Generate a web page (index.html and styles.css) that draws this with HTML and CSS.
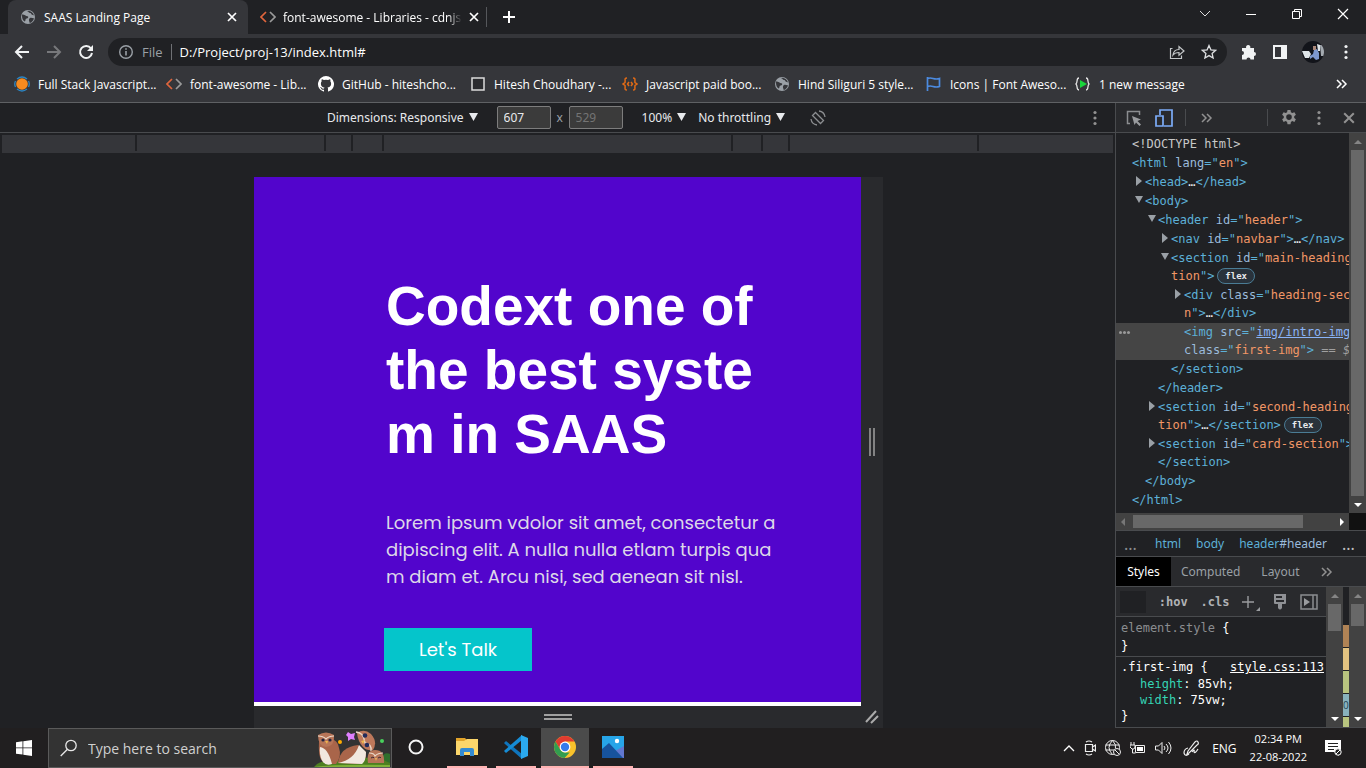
FILE: index.html
```html
<!DOCTYPE html>
<html lang="en">
<head>
<meta charset="utf-8">
<title>SAAS Landing Page</title>
<link rel="stylesheet" href="styles.css">
</head>
<body>
<svg class="sprite" aria-hidden="true">
  <symbol id="globe" viewBox="0 0 16 16"><circle cx="8" cy="8" r="7" fill="#9aa0a6"/><path d="M2 5.500C4 5 5.500 7 7.500 7.200 9 7.500 8 9.500 6.500 9.500 5 9.500 6 12.500 4.500 12.500 3 11.500 1.800 9.500 2 5.500zM7 2.200c2 0 1.500 1.800 3.200 1.800C11.500 4 11 6 13 6l1 .6C13.500 4 11 1.800 8 1.700zM10 9c1.500-.8 2.500.5 4 .2-.5 2.500-2.300 4.200-4.200 4.800C9.500 12.500 8 10.500 10 9z" fill="#35363a"/></symbol>
  <symbol id="cdn" viewBox="0 0 16 12"><path d="M6 1 1 6l5 5" fill="none" stroke="#e0653c" stroke-width="1.700"/><path d="m10 1 5 5-5 5" fill="none" stroke="#9a9a9a" stroke-width="1.700"/></symbol>
  <symbol id="close" viewBox="0 0 10 10"><path d="m1 1 8 8M9 1 1 9" fill="none" stroke="currentColor" stroke-width="1.700"/></symbol>
  <symbol id="chevrons" viewBox="0 0 12 10"><path d="m1 1 4 4-4 4M6 1l4 4-4 4" fill="none" stroke="currentColor" stroke-width="1.500"/></symbol>
  <symbol id="dots" viewBox="0 0 4 16"><circle cx="2" cy="2.500" r="1.600"/><circle cx="2" cy="8" r="1.600"/><circle cx="2" cy="13.500" r="1.600"/></symbol>
  <symbol id="up" viewBox="0 0 8 4"><path d="M0 4 4 0l4 4z"/></symbol>
  <symbol id="down" viewBox="0 0 8 4"><path d="m0 0 4 4 4-4z"/></symbol>
  <symbol id="tri" viewBox="0 0 8 8"><path d="M0 0h8L4 7z"/></symbol>
</svg>

<header class="tabs">
  <div class="tab active"><svg class="i16"><use href="#globe"/></svg><span class="tab-title">SAAS Landing Page</span><button class="plain" aria-label="Close tab"><svg class="i10"><use href="#close"/></svg></button></div>
  <div class="tab second"><svg class="cdn"><use href="#cdn"/></svg><span class="tab-title fade">font-awesome - Libraries - cdnjs</span><button class="plain" aria-label="Close tab"><svg class="i10"><use href="#close"/></svg></button></div>
  <button class="plain new-tab" aria-label="New tab"><svg width="12" height="12"><path d="M6 0v12M0 6h12" stroke="#fff" stroke-width="2"/></svg></button>
  <div class="window-buttons">
    <button class="plain" aria-label="Search tabs"><svg width="12" height="12"><path d="m1 3 5 5 5-5" fill="none" stroke="#ddd"/></svg></button>
    <button class="plain" aria-label="Minimize"><svg width="12" height="12"><path d="M1 6.500h10" stroke="#fff"/></svg></button>
    <button class="plain" aria-label="Restore"><svg width="12" height="12"><path d="M1.500 3.500h7v7h-7zM3.500 3.500v-2h7v7h-2" fill="none" stroke="#fff"/></svg></button>
    <button class="plain" aria-label="Close"><svg width="12" height="12"><path d="m1 1 10 10M11 1 1 11" stroke="#fff" stroke-width="1.200"/></svg></button>
  </div>
</header>

<nav class="toolbar">
  <button class="plain" aria-label="Back"><svg width="16" height="16"><path d="M15 8H2M8 2 2 8l6 6" fill="none" stroke="#f1f3f4" stroke-width="2"/></svg></button>
  <button class="plain" aria-label="Forward"><svg width="16" height="16"><path d="M1 8h13M8 2l6 6-6 6" fill="none" stroke="#77787b" stroke-width="2"/></svg></button>
  <button class="plain" aria-label="Reload"><svg width="16" height="16"><path d="M13 4.500A6 6 0 1 0 14 9" fill="none" stroke="#f1f3f4" stroke-width="2"/><path d="M15 1v6H9z" fill="#f1f3f4"/></svg></button>
  <div class="address">
    <svg width="16" height="16"><circle cx="8" cy="8" r="6.300" fill="none" stroke="#9aa0a6" stroke-width="1.400"/><path d="M8 7v4.500M8 4.200v1.600" stroke="#9aa0a6" stroke-width="1.600"/></svg>
    <label for="url">File</label>
    <input id="url" type="text" value="D:/Project/proj-13/index.html#">
    <button class="plain" aria-label="Share"><svg width="16" height="16"><path d="M3.500 4.500h-2v10h11v-3M4 11c.5-4 3-5.500 6-5.500V2.500l5 4.500-5 4.300V8.500C7.500 8.500 5.500 9 4 11z" fill="none" stroke="#c4c7c9" stroke-width="1.200"/></svg></button>
    <button class="plain" aria-label="Bookmark"><svg width="16" height="16"><path d="m8 1.500 1.900 4.300 4.700.5-3.500 3.100 1 4.600L8 11.600 3.900 14l1-4.600L1.400 6.300l4.700-.5z" fill="none" stroke="#dcdee0" stroke-width="1.300"/></svg></button>
  </div>
  <div class="actions">
    <button class="plain" aria-label="Extensions"><svg width="16" height="16"><path d="M1 4h4.200a2.200 2.200 0 1 1 4 0H13v4a2 2 0 1 1 0 4v3.500H9.500a2 2 0 0 0-4 0H1V11a2 2 0 1 0 0-4z" fill="#f1f3f4"/></svg></button>
    <button class="plain" aria-label="Side panel"><svg width="14" height="14"><path fill-rule="evenodd" d="M0 0h14v14H0zM2 2v10h6V2z" fill="#f1f3f4"/></svg></button>
    <button class="plain" aria-label="Profile"><svg width="22" height="22"><defs><clipPath id="face"><circle cx="11" cy="11" r="11"/></clipPath></defs><g clip-path="url(#face)"><path fill="#12141a" d="M0 0h22v22H0z"/><path fill="#dfe5e9" d="M0 10h7l2 3-2 4H3zM15 3l3 1v6h-2z"/><path fill="#7d98ce" d="m12 9 3-1 2 4v6l-3 1-3-3-3 2v-3l3-2z"/><path fill="#a98678" d="M11 5h3v4h-3z"/><path fill="#a4aab0" d="M18 4h4v11h-3z"/></g></svg></button>
    <button class="plain" aria-label="Menu"><svg class="dots light"><use href="#dots"/></svg></button>
  </div>
</nav>

<nav class="bookmarks">
  <a href="#"><svg class="i16" viewBox="0 0 16 16"><circle cx="8" cy="8" r="5.800" fill="#f68b1f"/><path d="M3 3Q8-1 13 3M3 13q5 4 10 0M1.500 5Q0 8 1.500 11M14.500 5Q16 8 14.500 11" fill="none" stroke="#2b86c5" stroke-width="1.300"/></svg><span>Full Stack Javascript...</span></a>
  <a href="#"><svg class="cdn"><use href="#cdn"/></svg><span>font-awesome - Lib...</span></a>
  <a href="#"><svg class="i16" viewBox="0 0 16 16"><path fill="#fff" d="M8 0a8 8 0 0 0-2.500 15.600c.4.100.5-.2.500-.4v-1.500c-2.200.5-2.700-1-2.700-1-.4-.9-.9-1.200-.9-1.200-.7-.5.100-.5.100-.5.800.100 1.200.8 1.200.8.700 1.200 1.900.9 2.300.7.100-.5.300-.9.500-1.100-1.800-.2-3.600-.9-3.600-4 0-.9.300-1.600.8-2.100-.1-.2-.4-1 .1-2.100 0 0 .7-.2 2.200.8a7.500 7.500 0 0 1 4 0c1.500-1 2.200-.8 2.200-.8.400 1.100.200 1.900.100 2.100.500.500.800 1.200.800 2.100 0 3.100-1.900 3.700-3.600 3.900.300.300.500.8.500 1.500v2.400c0 .2.100.5.500.4A8 8 0 0 0 8 0z"/></svg><span>GitHub - hiteshcho...</span></a>
  <a href="#"><svg class="i16" viewBox="0 0 16 16"><path d="M2 2h12v12H2z" fill="#2b2c2f" stroke="#dcdcdc" stroke-width="1.500"/></svg><span>Hitesh Choudhary -...</span></a>
  <a href="#"><svg class="i16" viewBox="0 0 16 16"><path d="M5 2C2 2 3.500 4 3 6.500L1 8l2 1.500C3.500 12 2 14 5 14M11 2c3 0 1.500 2 2 4.500L15 8l-2 1.500c-.5 2.500 1 4.500-2 4.500M7 6 5.500 8 7 10M9 6l1.500 2L9 10" fill="none" stroke="#df6a16" stroke-width="1.500"/></svg><span>Javascript paid boo...</span></a>
  <a href="#"><svg class="i16"><use href="#globe"/></svg><span>Hind Siliguri 5 style...</span></a>
  <a href="#" class="narrow"><svg class="i16" viewBox="0 0 16 16"><path d="M1.500 1v14M1.500 2.500c5-2 6 2 12 0v8c-6 2-7-2-12 0" fill="none" stroke="#4c8be0" stroke-width="1.700"/></svg><span>Icons | Font Aweso...</span></a>
  <a href="#"><svg class="i16" viewBox="0 0 16 16"><path d="M4 2C1 2 3 6 1 8c2 2 0 6 3 6M11 2c3 0 1 4 3 6-2 2 0 6-3 6" fill="none" stroke="#e5e5e5" stroke-width="1.300"/><path d="m5 4 7 4-7 4z" fill="#19d63b"/></svg><span>1 new message</span></a>
  <button class="plain more" aria-label="More bookmarks"><svg class="chev"><use href="#chevrons"/></svg></button>
</nav>

<main class="work">
  <section class="device">
    <div class="device-bar">
      <button class="plain drop">Dimensions: Responsive <svg class="tri"><use href="#tri"/></svg></button>
      <input class="size" type="text" value="607" aria-label="Width"><span class="times">x</span><input class="size dim" type="text" value="529" aria-label="Height">
      <button class="plain drop zoom">100% <svg class="tri"><use href="#tri"/></svg></button>
      <button class="plain drop">No throttling <svg class="tri"><use href="#tri"/></svg></button>
      <button class="plain rotate" aria-label="Rotate"><svg width="16" height="16"><path d="m5.500 2.500 8 8-3 3-8-8zM9 1a7 7 0 0 1 6 6M7 15a7 7 0 0 1-6-6" fill="none" stroke="#8b8d90" stroke-width="1.300"/></svg></button>
      <button class="plain device-menu" aria-label="More options"><svg class="dots"><use href="#dots"/></svg></button>
    </div>
    <div class="ruler"><i></i><i></i><i></i><i></i><i></i><i></i><i></i><i></i><i></i></div>
    <div class="stage">
      <article class="screen">
        <div class="hero">
          <h1>Codext one of<br>the best syste<br>m in SAAS</h1>
          <p>Lorem ipsum vdolor sit amet, consectetur a<br>dipiscing elit. A nulla nulla etlam turpis qua<br>m diam et. Arcu nisi, sed aenean sit nisl.</p>
          <a class="talk" href="#">Let's Talk</a>
        </div>
      </article>
      <div class="grip side"><svg width="6" height="28"><path d="M1 0v28M5 0v28" stroke="#999" stroke-width="1.600"/></svg></div>
      <div class="grip bottom"><svg width="28" height="8"><path d="M0 2h28M0 6h28" stroke="#a0a0a0" stroke-width="2"/></svg></div>
      <div class="grip corner"><svg width="14" height="14"><path d="M1 12 11 1M6 13l7-7" stroke="#aaa" stroke-width="2"/></svg></div>
    </div>
  </section>

  <aside class="devtools">
    <div class="dt-bar">
      <button class="plain" aria-label="Inspect"><svg width="16" height="16"><path d="M4 13.500H1.500v-12h12V5" fill="none" stroke="#8b8d90" stroke-width="1.500"/><path d="m6 6 9 3.500-3.500 1.500 3.500 3.500-1.500 1.500L10 12.500 8.500 15z" fill="#9a9c9f"/></svg></button>
      <button class="plain" aria-label="Device toolbar"><svg width="18" height="18"><path d="M5 6V1h12v16H9M1 7h7v10H1z" fill="none" stroke="#7cacf8" stroke-width="1.700"/></svg></button>
      <hr>
      <button class="plain" aria-label="More panels"><svg class="chev grey"><use href="#chevrons"/></svg></button>
      <hr class="push">
      <button class="plain" aria-label="Settings"><svg width="16" height="16" viewBox="0 0 16 16"><path fill-rule="evenodd" fill="#919191" d="M6.500 0h3l.4 2.200 1.400.8 2.100-.8 1.500 2.600L13.200 6.200v1.700l1.700 1.400-1.500 2.600-2.100-.8-1.400.8-.4 2.300h-3l-.4-2.300-1.400-.8-2.100.8-1.500-2.600L2.800 7.900V6.200L1.100 4.800l1.500-2.600 2.100.8 1.400-.8zM8 4.300a2.800 2.800 0 1 0 0 5.600 2.800 2.800 0 0 0 0-5.600z"/></svg></button>
      <button class="plain" aria-label="DevTools menu"><svg class="dots"><use href="#dots"/></svg></button>
      <button class="plain grey" aria-label="Close DevTools"><svg class="i10 big"><use href="#close"/></svg></button>
    </div>

    <div class="elements">
      <ul class="tree">
        <li class="l0 doc">&lt;!DOCTYPE html&gt;</li>
        <li class="l0">&lt;html <b>lang</b>="<em>en</em>"&gt;</li>
        <li class="l1 shut">&lt;head&gt;<s>…</s>&lt;/head&gt;</li>
        <li class="l1 open">&lt;body&gt;</li>
        <li class="l2 open">&lt;header <b>id</b>="<em>header</em>"&gt;</li>
        <li class="l3 shut">&lt;nav <b>id</b>="<em>navbar</em>"&gt;<s>…</s>&lt;/nav&gt;</li>
        <li class="l3 open">&lt;section <b>id</b>="<em>main-heading-sec<br>tion</em>"&gt;<span class="badge">flex</span></li>
        <li class="l4 shut">&lt;div <b>class</b>="<em>heading-sectio<br>n</em>"&gt;<s>…</s>&lt;/div&gt;</li>
        <li class="l4 picked">&lt;img <b>src</b>="<a href="#">img/intro-img.png</a>"<br><b>class</b>="<em>first-img</em>"&gt;<span class="ref"> == $0</span></li>
        <li class="l3">&lt;/section&gt;</li>
        <li class="l2">&lt;/header&gt;</li>
        <li class="l2 shut">&lt;section <b>id</b>="<em>second-heading-sec<br>tion</em>"&gt;<s>…</s>&lt;/section&gt;<span class="badge">flex</span></li>
        <li class="l2 shut">&lt;section <b>id</b>="<em>card-section</em>"&gt;<s>…</s><br>&lt;/section&gt;</li>
        <li class="l1">&lt;/body&gt;</li>
        <li class="l0">&lt;/html&gt;</li>
      </ul>
      <div class="vbar"><svg class="arrow off"><use href="#up"/></svg><div class="thumb long"></div><svg class="arrow"><use href="#down"/></svg></div>
      <div class="hbar"><svg width="4" height="8"><path d="M4 0v8L0 4z" fill="#777"/></svg><div class="hthumb"></div><svg width="4" height="8"><path d="m0 0 4 4-4 4z" fill="#fff"/></svg></div>
      <div class="notch"></div>
    </div>

    <div class="crumbs"><span class="ell">...</span><a href="#">html</a><a href="#">body</a><a href="#">header<b>#header</b></a><span class="ell end">...</span></div>
    <div class="panes"><button class="plain on">Styles</button><button class="plain">Computed</button><button class="plain">Layout</button><button class="plain" aria-label="More panes"><svg class="chev grey"><use href="#chevrons"/></svg></button></div>

    <div class="styles">
      <div class="rules">
        <div class="filter">
          <input type="text" aria-label="Filter styles">
          <button class="plain">:hov</button><button class="plain">.cls</button>
          <button class="plain" aria-label="New rule"><svg width="18" height="18"><path d="M6 3v12M0 9h12" stroke="#9a9c9f" stroke-width="1.400"/><path d="M18 14v5h-5z" fill="#9a9c9f"/></svg></button>
          <button class="plain" aria-label="Paint"><svg width="14" height="16"><path fill-rule="evenodd" d="M1 0h12v9q0 1-1 1H9v4q-2 3-4 0v-4H2q-1 0-1-1zM3 2v2h6V2zM3 6v2h8V6z" fill="#8f9195"/></svg></button>
          <button class="plain" aria-label="Sidebar"><svg width="18" height="16"><path d="M1 1h16v14H1zM13 1v14" fill="none" stroke="#8b8d90" stroke-width="1.500"/><path d="m4 4 6 4-6 4z" fill="#9a9c9f"/></svg></button>
        </div>
        <div class="rule"><span class="faint">element.style</span> {<br>}</div>
        <div class="rule last"><div class="selector"><span>.first-img {</span><a href="#">style.css:113</a></div><div class="decl"><i>height</i>: 85vh;</div><div class="decl"><i>width</i>: 75vw;</div><div>}</div></div>
      </div>
      <div class="vbar"><svg class="arrow off"><use href="#up"/></svg><div class="thumb mid"></div><svg class="arrow"><use href="#down"/></svg></div>
      <div class="box-model"><i class="m"></i><i class="b"></i><i class="p"></i><i class="c">0</i><i class="p"></i></div>
      <div class="vbar"><svg class="arrow off"><use href="#up"/></svg><div class="thumb short"></div><svg class="arrow"><use href="#down"/></svg></div>
    </div>
  </aside>
</main>

<footer class="taskbar">
  <button class="plain start" aria-label="Start"><svg width="16" height="16"><path fill="#fff" d="M0 2.200 6.500 1.300v6.200H0zM7.300 1.200 16 0v7.500H7.300zM0 8.300h6.500v6.300L0 13.700zM7.300 8.300H16V16l-8.700-1.200z"/></svg></button>
  <div class="search">
    <svg width="18" height="18"><circle cx="11" cy="6.500" r="5.200" fill="none" stroke="#e8e8e8" stroke-width="1.300"/><path d="m7.200 10.500-6.500 6.500" stroke="#e8e8e8" stroke-width="1.300"/></svg>
    <input type="text" placeholder="Type here to search" aria-label="Search">
    <svg class="owls" width="78" height="38" viewBox="0 0 78 38"><path d="M1 38q5-7 18-6 30-4 58-4v10z" fill="#4d7f21"/><path d="M1 38q20-3 76-2v2z" fill="#7fb238"/><path d="M68 30q3-8 9-5v9z" fill="#2f6f2c"/><path d="M6 12q-1 16 3 20l5 3h9q6-8 3-16-1-6-5-8z" fill="#a9654a"/><path d="M7 18q8 1 12 17-6 2-9-2-4-6-3-15z" fill="#f1e8df"/><path d="M5 6q8-5 16 0 1 11-8 12Q5 17 5 6z" fill="#b77558"/><path d="M5 7q5 0 8 3 3-3 8-3" fill="none" stroke="#ead7c7" stroke-width="1.200"/><circle cx="10" cy="11" r="1.600" fill="#23253f"/><circle cx="17" cy="11" r="1.600" fill="#23253f"/><path d="m12 12 2 3 1-3z" fill="#efb54d"/><path d="M25 34Q27 18 45 16l8 7q1 10-9 12z" fill="#a9654a"/><path d="M25 34q16-3 21-18l7 7q0 9-4 12z" fill="#f1e8df"/><path d="M44 4q7-5 14 1 7 8 2 16-6 1-10-3-5-5-6-14z" fill="#bd785b"/><path d="M43 3q7 1 8 7l1 4q7 1 6 8" fill="none" stroke="#ead7c7" stroke-width="1.300"/><circle cx="52" cy="6.500" r="2.300" fill="#232b5a"/><circle cx="54" cy="16" r="2.300" fill="#232b5a"/><path d="m48 12 4-1-2 4z" fill="#efb54d"/><path d="M55 34q-2-13 7-13 10 0 9 13z" fill="#b77558"/><path d="M56 24q5 0 6 3 3-3 8-3" fill="none" stroke="#ead7c7" stroke-width="1.200"/><path d="m58 29 2-1 1 1M65 29l2-1 1 1" stroke="#3f2d35" fill="none"/><path d="m62 29 1 3 1-3z" fill="#f0b958"/><path d="m35 3 3 2 4-1-1 4 1 3-4-1-3 2V8l-2-2z" fill="#df80ff"/><circle cx="27" cy="13" r="2" fill="#ffad00"/><circle cx="69" cy="12" r="2" fill="#49d15d"/></svg>
  </div>
  <button class="plain task bare" aria-label="Cortana"><svg width="18" height="18"><circle cx="9" cy="9" r="6.500" fill="none" stroke="#f5f5f5" stroke-width="2"/></svg></button>
  <button class="plain task" aria-label="Files"><svg width="22" height="18"><path fill="#e1a32a" d="M0 0h9l2 2v3H0z"/><path fill="#fcd66b" d="M0 3h8l3-2h11v16H0z"/><path fill="#348bd2" d="M4 18v-6q0-2 2-2h10q2 0 2 2v6h-4v-4H8v4z"/></svg></button>
  <button class="plain task" aria-label="Visual Studio Code"><svg width="24" height="24"><path fill="#0f75bd" d="m0 8 2-2 16 13v5L1 9z"/><path fill="#168cd5" d="m0 16 2 2L18 5V0L1 15z"/><path fill="#2ba9ee" d="m17 0 7 3v18l-7 3z"/></svg></button>
  <button class="plain task wide" aria-label="Chrome"><svg width="22" height="22" viewBox="0 0 22 22"><circle cx="11" cy="11" r="11" fill="#f9c22b"/><path fill="#df3b30" d="M1.500 5.500A11 11 0 0 1 20.500 5.500H11L6.300 13.700z"/><path fill="#329d50" d="M1.500 5.500 6.300 13.700Q8 16.500 11 16.500h4.700L10.500 22A11 11 0 0 1 1.500 5.500z"/><circle cx="11" cy="11" r="5.400" fill="#fff"/><circle cx="11" cy="11" r="4.200" fill="#347bea"/></svg></button>
  <button class="plain task" aria-label="Photos"><svg width="22" height="22"><path fill="#27a5e8" d="M0 0h22v22H0z"/><path fill="#6277cf" d="m22 10-9 5v7h9z"/><path fill="#17539d" d="M0 13 7 7l14 15H0z"/><circle cx="15" cy="5" r="2.200" fill="#fff"/></svg></button>
  <div class="tray">
    <svg width="12" height="8"><path d="m1 7 5-5 5 5" fill="none" stroke="#fff" stroke-width="1.300"/></svg>
    <svg width="12" height="16"><path d="M1.500 4.500h7v7h-7zM8.500 7l3-2v6l-3-2M2 2q3-2 6 0M2 14q3 2 6 0" fill="none" stroke="#eee" stroke-width="1.200"/></svg>
    <svg width="16" height="16"><circle cx="7.500" cy="7.500" r="7" fill="none" stroke="#eee"/><path d="M.5 5h14M.5 10H9M7.500.5q-7 7 0 14M7.500.5q4 4 3 8" fill="none" stroke="#eee"/><circle cx="12" cy="12" r="3.500" fill="#211f20" stroke="#eee"/><path d="m10 10 4 4" stroke="#eee"/></svg>
    <svg width="16" height="12"><path d="M5.500 3.500h9v7h-9zM1 0v3M4 0v3M0 3h5v2L4 7H2L0 5zM2.500 7v4h3" fill="none" stroke="#eee"/><path d="M7 5h6v4H7z" fill="#fff"/></svg>
    <svg width="17" height="14"><path d="M.5 5h3L7 1.500v11L3.500 9h-3zM9 5q2 2 0 4M11 3q4 4 0 8M13.500 1q5 6 0 12" fill="none" stroke="#eee"/></svg>
    <svg class="pen" width="16" height="16"><path d="m5 11 7-9q2-2 3 0t-1 3l-8 8-2 1zM5 8Q1 9 1 13q1 4 5 1M9 12q3-4 2 0 1 2 4-3" fill="none" stroke="#eee" stroke-width="1.200"/></svg>
    <span>ENG</span>
    <time>02:34 PM<br>22-08-2022</time>
    <svg width="17" height="17"><path d="M0 0h16v12h-2v4l-4-4H0z" fill="#fff"/><path d="M3 3.500h10M3 6.500h10M3 9.500h6" stroke="#222"/><circle cx="13" cy="12" r="3.200" fill="#222" stroke="#fff"/><path d="m11 14 4-4" stroke="#fff"/></svg>
  </div>
</footer>
</body>
</html>
```
FILE: styles.css
```css
* { box-sizing: border-box; }
body { margin: 0; height: 100vh; min-height: 600px; display: flex; flex-direction: column; overflow: hidden; background: #202124; color: #fff; font: 12px "Open Sans", "Noto Sans", sans-serif; }
svg { display: block; flex: none; }
a { color: inherit; text-decoration: none; }
input { min-width: 0; border: 0; padding: 0; color: inherit; font: inherit; background: none; outline: 0; }
.sprite { position: absolute; width: 0; height: 0; }
.plain { display: flex; align-items: center; justify-content: center; flex: none; padding: 0; border: 0; background: none; color: inherit; font: inherit; white-space: nowrap; }
.i16 { width: 16px; height: 16px; }
.i10 { width: 10px; height: 10px; }
.i10.big { width: 12px; height: 12px; }
.cdn { width: 16px; height: 12px; }
.chev { width: 12px; height: 10px; }
.grey { color: #919191; }
.dots { width: 4px; height: 16px; fill: #919191; }
.dots.light { fill: #f1f3f4; }

.tabs { flex: none; display: flex; height: 34px; padding-left: 8px; }
.tab { display: flex; align-items: center; width: 240px; padding: 0 11px 0 12px; gap: 8px; }
.tab.active { background: #35363a; border-radius: 8px 8px 0 0; }
.tab.second { width: 239px; padding-right: 10px; gap: 7px; }
.tab.second::after { content: ""; width: 1px; height: 20px; margin-right: -10px; background: #55575b; }
.tab-title { flex: 1; min-width: 0; overflow: hidden; white-space: nowrap; }
.fade { -webkit-mask-image: linear-gradient(90deg, #000 92%, transparent); mask-image: linear-gradient(90deg, #000 92%, transparent); }
.new-tab { width: 44px; }
.window-buttons { display: flex; margin-left: auto; height: 28px; }
.window-buttons .plain { width: 46px; }

.toolbar { flex: none; display: flex; align-items: center; height: 36px; padding: 0 11px 0 14px; background: #35363a; }
.toolbar > .plain { margin-right: 16px; }
.toolbar > .plain:nth-child(3) { margin-right: 14px; }
.address { flex: 1; display: flex; align-items: center; height: 28px; padding: 0 10px; gap: 16px; border-radius: 14px; background: #202124; font-size: 13px; }
.address label { margin-left: -8px; padding-right: 8px; border-right: 1px solid #6f7175; line-height: 16px; color: #9aa0a6; }
.address input { flex: 1; margin-left: -8px; }
.actions { display: flex; align-items: center; margin-left: 13px; gap: 13px; }
.actions .plain { min-width: 18px; }

.bookmarks { flex: none; display: flex; align-items: center; height: 33px; padding: 0 18px 4px 14px; background: #35363a; border-bottom: 1px solid #5f6164; }
.bookmarks a { display: flex; align-items: center; gap: 8px; width: 152px; height: 28px; white-space: nowrap; }
.bookmarks a.narrow { width: 149px; }
.more { margin-left: auto; }

.work { flex: 1; min-height: 0; display: flex; }
.device { flex: 1; min-width: 0; display: flex; flex-direction: column; background: #202124; }
.device-bar { position: relative; flex: none; display: flex; align-items: center; justify-content: center; height: 30px; padding-left: 38px; border-bottom: 1px solid #494b4e; font: 12px "Noto Sans", sans-serif; color: #e8eaed; }
.drop { gap: 5px; margin-right: 12px; }
.drop:first-child { margin-right: 19px; }
.tri { width: 9px; height: 9px; fill: #e8eaed; }
.size { width: 54px; height: 23px; padding: 0 6px; border: 1px solid #7d7d7d; background: #3b3b3b; border-radius: 2px; color: #e8eaed; }
.size.dim { color: #747474; }
.times { width: 18px; text-align: center; color: #9aa0a6; }
.zoom { margin-left: 19px; }
.rotate { margin-left: 13px; }
.device-menu { position: absolute; right: 18px; top: 7px; }
.ruler { flex: none; display: grid; grid-template-columns: 135fr 189fr 27fr 31fr 350fr 30fr 27fr 189fr 134fr; height: 18px; margin: 2px 2px 0; background: #35363a; }
.ruler i { height: 16px; border-right: 2px solid #202124; }
.ruler i:last-child { border: 0; }
.stage { flex: 1; min-height: 0; display: grid; grid-template: minmax(0, 1fr) 22px / 607px 22px; justify-content: center; padding: 24px 0 0 22px; }
.screen { background: #fff; padding-bottom: 4px; }
.hero { height: 100%; padding: 97px 40px 0 132px; overflow: hidden; background: #5205cc; }
.hero h1 { margin: 0; font: bold 55px/64px "Liberation Sans", Arial, sans-serif; white-space: nowrap; }
.hero p { margin: 43px 0 0; font: 18px/27px Poppins, Lato, sans-serif; color: #ddd8e8; white-space: nowrap; }
.talk { display: flex; align-items: center; justify-content: center; width: 148px; height: 43px; margin: 38px 0 0 -2px; background: #05c5cb; font: 18px Poppins, Lato, sans-serif; }
.grip { display: flex; align-items: center; justify-content: center; background: #292a2d; }

.devtools { flex: none; width: 251px; min-width: 0; display: flex; flex-direction: column; border-left: 1px solid #494b4e; }
.dt-bar { flex: none; display: flex; align-items: center; height: 30px; padding: 0 8px 0 9px; gap: 12px; background: #292a2d; border-bottom: 1px solid #494b4e; }
.dt-bar hr { width: 1px; height: 17px; margin: 0; border: 0; background: #494b4e; }
.dt-bar .push { margin-left: auto; }
.dt-bar .plain { min-width: 18px; }
.elements { flex: 1; min-height: 0; display: grid; grid-template: minmax(0, 1fr) 17px / minmax(0, 1fr) 17px; }
.tree { margin: 0; padding: 2px 0 0; overflow: hidden; list-style: none; font: 12px/18px "DejaVu Sans Mono", monospace; color: #5db0d7; }
.tree li { position: relative; padding-bottom: 1px; white-space: pre; }
.tree .l0 { padding-left: 16px; }
.tree .l1 { padding-left: 29px; }
.tree .l2 { padding-left: 42px; }
.tree .l3 { padding-left: 55px; }
.tree .l4 { padding-left: 68px; }
.tree .doc { color: #c8c8c8; }
.tree b { font-weight: normal; color: #9bbbdc; }
.tree em { font-style: normal; color: #f29766; }
.tree s { text-decoration: none; color: #e8eaed; }
.tree a { color: #8ab4f8; text-decoration: underline; }
.shut::before, .open::before { content: ""; display: inline-block; width: 0; border: 4px solid transparent; }
.shut::before { margin-left: -9px; margin-right: 3px; border-width: 5px 0 5px 6px; border-left-color: #9aa0a6; }
.open::before { margin-left: -10px; margin-right: 2px; border-width: 7px 4px 0; border-top-color: #9aa0a6; vertical-align: 2px; }
.picked { background: #454545; }
.picked::before { content: ""; position: absolute; left: 3px; top: 8px; width: 3px; height: 3px; border-radius: 50%; background: #999; box-shadow: 4px 0 #999, 8px 0 #999; }
.ref { color: #a0a0a0; font-style: italic; }
.badge { display: inline-block; height: 16px; margin: 1px 0 0 3px; padding: 0 7px; border: 1px solid #4a7c95; border-radius: 8px; background: #29323b; color: #e8eaed; font: bold 9px/14px "DejaVu Sans Mono", monospace; vertical-align: top; }
.vbar { width: 17px; min-height: 0; display: flex; flex-direction: column; align-items: center; padding: 7px 0 6px; background: #424242; }
.arrow { width: 8px; height: 4px; fill: #fff; margin-top: auto; }
.arrow.off { fill: #858585; margin: 0 0 6px; }
.thumb { width: 13px; background: #686868; }
.thumb.long { flex: 1; margin-bottom: 7px; }
.thumb.mid { height: 27px; }
.thumb.short { height: 22px; }
.hbar { display: flex; align-items: center; padding: 0 5px; background: #424242; }
.hthumb { flex: 0 1 170px; height: 13px; margin: 0 auto 0 8px; background: #686868; }
.notch { background: #111; }
.crumbs { flex: none; display: flex; align-items: center; height: 27px; padding: 0 8px; gap: 15px; border-top: 1px solid #494b4e; border-bottom: 1px solid #494b4e; color: #5db0d7; font: 12px "Noto Sans", sans-serif; }
.crumbs b { font-weight: normal; color: #9bbbdc; }
.ell { width: 17px; color: #8b8d90; font-size: 16px; }
.ell.end { margin-left: auto; color: #c0c0c0; }
.panes { flex: none; display: flex; height: 29px; gap: 21px; background: #292a2d; color: #9aa0a6; font: 12px "Noto Sans", sans-serif; }
.panes .plain { font: inherit; }
.panes .on { width: 55px; margin-right: -11px; background: #000; color: #fff; }
.styles { flex: none; display: flex; height: 142px; border-top: 1px solid #494b4e; border-bottom: 1px solid #494b4e; }
.rules { flex: 1; min-width: 0; font: 12px/18px "DejaVu Sans Mono", monospace; }
.filter { display: flex; align-items: center; justify-content: space-between; height: 29px; padding: 0 8px 0 4px; background: #292a2d; color: #b0b2b5; font-weight: bold; }
.filter input { width: 26px; height: 22px; background: #202124; }
.rule { padding: 2px 2px 1px 5px; border-top: 1px solid #494b4e; }
.faint { color: #8b8d90; }
.selector { display: flex; justify-content: space-between; line-height: 18px; }
.selector a { text-decoration: underline; }
.rule.last { padding-top: 1px; line-height: 16px; }
.decl { padding-left: 19px; }
.decl i { font-style: normal; color: #35d4b5; }
.box-model { flex: none; width: 6px; padding-top: 38px; overflow: hidden; font-size: 10px; }
.box-model i { display: block; height: 22px; margin-bottom: 1px; font-style: normal; color: #245; line-height: 22px; }
.box-model .m { background: #b08355; }
.box-model .b { background: #e3c381; }
.box-model .p { background: #b8c47f; }
.box-model .c { background: #88b2bd; }

.taskbar { flex: none; display: flex; align-items: center; height: 40px; background: #211f20; }
.start { width: 48px; height: 40px; }
.search { display: flex; align-items: center; width: 344px; height: 40px; padding-left: 11px; gap: 10px; border: 1px solid #5a5a5a; background: #333; color: #ddd; font-size: 14px; }
.search input { flex: 1; }
.search input::placeholder { color: #d0d0d0; opacity: 1; }
.owls { align-self: flex-end; }
.task { width: 40px; height: 40px; margin: 0 5px 0 4px; border-bottom: 2px solid #ffb3b3; }
.task.bare { width: 48px; margin: 0 3px 0 0; border-color: transparent; }
.task.wide { width: 48px; margin: 0; background: #4b4b4b; }
.tray { display: flex; align-items: center; gap: 9px; margin-left: auto; padding-right: 24px; }
.pen { margin: 0 4px 0 2px; }
.tray time { text-align: center; font-size: 11px; line-height: 18px; margin: 0 9px 0 4px; }
```
